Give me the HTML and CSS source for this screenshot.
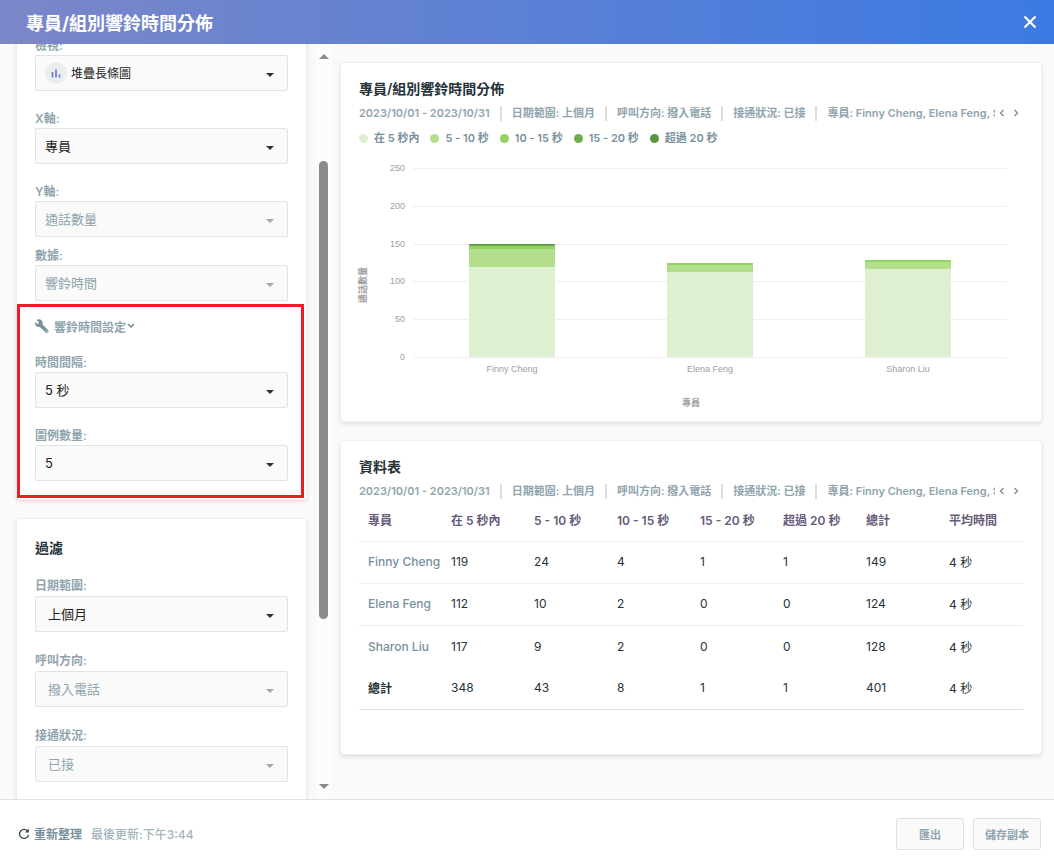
FILE: index.html
```html
<!DOCTYPE html>
<html lang="zh-Hant">
  <head>
    <meta charset="utf-8">
    <title>專員/組別響鈴時間分佈</title>
    <link rel="stylesheet" href="styles.css">
  </head>
  <body>
    <header class="topbar">
      <h1>專員/組別響鈴時間分佈</h1>
      <button class="close" aria-label="關閉">
        <svg width="14" height="14" viewBox="0 0 14 14"><path d="M1.5 1.5l11 11M12.5 1.5l-11 11" stroke="#fff" stroke-width="2.2" fill="none"/></svg>
      </button>
    </header>

    <main class="main">
      <aside class="sidebar">
        <div class="sidebar-scroll">
          <section class="card settings">
            <div class="field">
              <label for="view">檢視:</label>
              <div class="select with-icon">
                <span class="view-icon">
                  <svg width="10" height="10" viewBox="0 0 10 10"><path d="M1.500 4v5.500M5 1.500v8M8.500 6.500v3" stroke="#6673c4" stroke-width="1.600"/></svg>
                </span>
                <select id="view"><option>堆疊長條圖</option></select>
              </div>
            </div>
            <div class="field">
              <label for="x-axis">X軸:</label>
              <div class="select"><select id="x-axis"><option>專員</option></select></div>
            </div>
            <div class="field compact">
              <label for="y-axis">Y軸:</label>
              <div class="select disabled"><select id="y-axis" disabled><option>通話數量</option></select></div>
            </div>
            <div class="field last">
              <label for="metric">數據:</label>
              <div class="select disabled"><select id="metric" disabled><option>響鈴時間</option></select></div>
            </div>

            <div class="highlight">
              <button class="toggle">
                <svg width="14" height="14" viewBox="0 0 14 14">
                  <path d="M5.2 0.4C3.8-.1 2.4.2 1.400 1L3.900 3.300 3.300 4.500 2 4.900 0.300 2.700C-.3 4.500.2 6.300 1.500 7.300c1 .8 2.300 1 3.400.6l5.700 5.500c.7.6 1.700.6 2.400 0 .7-.7.7-1.700.1-2.400L7.500 5.600C8.200 3.500 7.300 1.200 5.200.4z" fill="#7d919c"/>
                  <circle cx="11.800" cy="12.100" r=".7" fill="#fff"/>
                </svg>
                <span>響鈴時間設定</span>
                <svg class="chevron" width="8" height="6" viewBox="0 0 8 6"><path d="M1 1l3 3 3-3" stroke="#6f8591" stroke-width="1.500" fill="none"/></svg>
              </button>
              <div class="field">
                <label for="interval">時間間隔:</label>
                <div class="select"><select id="interval"><option>5 秒</option></select></div>
              </div>
              <div class="field last">
                <label for="legend-count">圖例數量:</label>
                <div class="select"><select id="legend-count"><option>5</option></select></div>
              </div>
            </div>
          </section>

          <section class="card filters">
            <h2>過濾</h2>
            <div class="field">
              <label for="date-range">日期範圍:</label>
              <div class="select"><select id="date-range"><option>上個月</option></select></div>
            </div>
            <div class="field">
              <label for="direction">呼叫方向:</label>
              <div class="select disabled"><select id="direction" disabled><option>撥入電話</option></select></div>
            </div>
            <div class="field">
              <label for="status">接通狀況:</label>
              <div class="select disabled"><select id="status" disabled><option>已接</option></select></div>
            </div>
          </section>
        </div>
        <div class="scrollbar">
          <span class="arrow-up"></span>
          <div class="track"><div class="thumb"></div></div>
          <span class="arrow-down"></span>
        </div>
      </aside>

      <div class="content">
        <section class="card report">
          <h2>專員/組別響鈴時間分佈</h2>
          <div class="meta">
            <div class="meta-list">
              <span>2023/10/01 - 2023/10/31</span>
              <span>日期範圍: 上個月</span>
              <span>呼叫方向: 撥入電話</span>
              <span>接通狀況: 已接</span>
              <span>專員: Finny Cheng, Elena Feng, Sharon Liu</span>
            </div>
            <button aria-label="上一個"><svg width="6" height="8" viewBox="0 0 6 8"><path d="M4.500 1l-3 3 3 3" stroke="#7d919c" stroke-width="1.400" fill="none"/></svg></button>
            <button aria-label="下一個"><svg width="6" height="8" viewBox="0 0 6 8"><path d="M1.500 1l3 3-3 3" stroke="#7d919c" stroke-width="1.400" fill="none"/></svg></button>
          </div>
          <ul class="legend">
            <li class="c1">在 5 秒內</li>
            <li class="c2">5 - 10 秒</li>
            <li class="c3">10 - 15 秒</li>
            <li class="c4">15 - 20 秒</li>
            <li class="c5">超過 20 秒</li>
          </ul>

          <div class="chart">
            <div class="y-title"><span>通話數量</span></div>
            <div class="y-axis">
              <span>250</span><span>200</span><span>150</span><span>100</span><span>50</span><span>0</span>
            </div>
            <div class="plot">
              <div class="grid-lines"><i></i><i></i><i></i><i></i><i></i><i></i></div>
              <!-- segment heights are value / 250 -->
              <div class="bars">
                <div class="bar">
                  <i class="c5" style="height: 0.4%"></i>
                  <i class="c4" style="height: 0.4%"></i>
                  <i class="c3" style="height: 1.6%"></i>
                  <i class="c2" style="height: 9.6%"></i>
                  <i class="c1" style="height: 47.6%"></i>
                </div>
                <div class="bar">
                  <i class="c3" style="height: 0.8%"></i>
                  <i class="c2" style="height: 4%"></i>
                  <i class="c1" style="height: 44.8%"></i>
                </div>
                <div class="bar">
                  <i class="c3" style="height: 0.8%"></i>
                  <i class="c2" style="height: 3.6%"></i>
                  <i class="c1" style="height: 46.8%"></i>
                </div>
              </div>
            </div>
            <div class="x-axis"><span>Finny Cheng</span><span>Elena Feng</span><span>Sharon Liu</span></div>
          </div>
          <div class="x-title">專員</div>
        </section>

        <section class="card report table-card">
          <h2>資料表</h2>
          <div class="meta">
            <div class="meta-list">
              <span>2023/10/01 - 2023/10/31</span>
              <span>日期範圍: 上個月</span>
              <span>呼叫方向: 撥入電話</span>
              <span>接通狀況: 已接</span>
              <span>專員: Finny Cheng, Elena Feng, Sharon Liu</span>
            </div>
            <button aria-label="上一個"><svg width="6" height="8" viewBox="0 0 6 8"><path d="M4.500 1l-3 3 3 3" stroke="#7d919c" stroke-width="1.400" fill="none"/></svg></button>
            <button aria-label="下一個"><svg width="6" height="8" viewBox="0 0 6 8"><path d="M1.500 1l3 3-3 3" stroke="#7d919c" stroke-width="1.400" fill="none"/></svg></button>
          </div>
          <table>
            <thead>
              <tr><th>專員</th><th>在 5 秒內</th><th>5 - 10 秒</th><th>10 - 15 秒</th><th>15 - 20 秒</th><th>超過 20 秒</th><th>總計</th><th>平均時間</th></tr>
            </thead>
            <tbody>
              <tr><td class="name">Finny Cheng</td><td>119</td><td>24</td><td>4</td><td>1</td><td>1</td><td>149</td><td>4 秒</td></tr>
              <tr><td class="name">Elena Feng</td><td>112</td><td>10</td><td>2</td><td>0</td><td>0</td><td>124</td><td>4 秒</td></tr>
              <tr><td class="name">Sharon Liu</td><td>117</td><td>9</td><td>2</td><td>0</td><td>0</td><td>128</td><td>4 秒</td></tr>
            </tbody>
            <tfoot>
              <tr><td class="total">總計</td><td>348</td><td>43</td><td>8</td><td>1</td><td>1</td><td>401</td><td>4 秒</td></tr>
            </tfoot>
          </table>
        </section>
      </div>
    </main>

    <footer class="footer">
      <a class="refresh" href="#">
        <svg width="12" height="12" viewBox="0 0 12 12"><path d="M9.800 3.400A4.500 4.500 0 1 0 10.500 6.800" stroke="#37474f" stroke-width="1.300" fill="none"/><path d="M10.900.6v4H7z" fill="#37474f"/></svg>
        <span>重新整理</span>
      </a>
      <span class="updated">最後更新:下午3:44</span>
      <button class="btn">匯出</button>
      <button class="btn">儲存副本</button>
    </footer>
  </body>
</html>
```
FILE: styles.css
```css
* {
  box-sizing: border-box;
}

body {
  margin: 0;
  height: 100vh;
  display: flex;
  flex-direction: column;
  overflow: hidden;
  background-color: #fafafa;
  color: #263238;
  font-family: Inter, "Noto Sans CJK TC", sans-serif;
  font-size: 12px;
}

button {
  padding: 0;
  border: none;
  background: none;
  font-family: inherit;
  cursor: pointer;
}

svg {
  display: block;
}

.topbar {
  flex: none;
  height: 44px;
  padding: 0 17px 0 26px;
  display: flex;
  align-items: center;
  justify-content: space-between;
  background: linear-gradient(90deg, #7c87c8, #6582d0 34%, #3b7ae3);
}

.topbar h1 {
  margin: 0;
  color: white;
  font-size: 18px;
  font-weight: 700;
}

.main {
  flex: 1;
  min-height: 0;
  display: flex;
}

.sidebar {
  flex: 0 0 331px;
  display: flex;
  padding-left: 16px;
}

.sidebar-scroll {
  flex: 1;
  overflow: hidden;
  padding-right: 9px;
  margin-left: -8px;
  padding-left: 8px;
}

.card {
  background-color: white;
  border: 1px solid #efefef;
  border-radius: 4px;
  box-shadow: 0 2px 4px rgba(0, 0, 0, 0.1);
}

.card h2 {
  margin: 0;
  font-size: 14px;
  font-weight: 600;
  line-height: 20px;
}

/* settings panel is scrolled part of the way down */
.settings {
  margin-top: -26px;
  padding: 18px 18px 1px;
}

.filters {
  margin-top: 18px;
  padding: 19px 18px;
}

.filters h2 {
  margin-bottom: 18px;
}

.field {
  margin-bottom: 19px;
}

.field.compact {
  margin-bottom: 10px;
}

.field.last {
  margin-bottom: 0;
}

.field label {
  display: block;
  color: #90a4ae;
  font-weight: 600;
  line-height: 18px;
}

.filters .field label {
  line-height: 20px;
}

.select {
  position: relative;
  display: flex;
  align-items: center;
  height: 36px;
  border: 1px solid #dfe5e6;
  border-radius: 2px;
  background-color: #fafafa;
}

.select::after {
  content: "";
  position: absolute;
  right: 13px;
  top: 17px;
  border: 4px solid transparent;
  border-top-color: #263238;
  border-bottom: none;
}

.select.disabled::after {
  border-top-color: #a3a9ac;
}

.select select {
  appearance: none;
  flex: 1;
  height: 34px;
  padding: 0 28px 0 9px;
  border: none;
  background: none;
  color: #212121;
  font-family: inherit;
  font-size: 13px;
}

.filters .select select {
  padding-left: 12px;
}

.select.disabled select {
  color: #90a4ae;
  opacity: 1;
}

.with-icon select {
  padding-left: 4px;
  font-size: 12px;
}

.view-icon {
  width: 22px;
  height: 22px;
  margin-left: 9px;
  display: flex;
  align-items: center;
  justify-content: center;
  border-radius: 50%;
  background-color: #eceff1;
}

.highlight {
  margin: 3px -16px 0 -18px;
  padding: 10px 13px 14px 15px;
  border: 3px solid #ed1c24;
}

.toggle {
  display: flex;
  align-items: center;
  height: 18px;
  margin-bottom: 19px;
  color: #90a4ae;
  font-size: 12px;
  font-weight: 600;
}

.toggle span {
  margin-left: 5px;
}

.toggle .chevron {
  margin-left: 1px;
}

.scrollbar {
  flex: 0 0 15px;
  display: flex;
  flex-direction: column;
  align-items: center;
  padding: 10px 0;
  background-color: #fcfcfc;
}

.arrow-up,
.arrow-down {
  border: 5px solid transparent;
}

.arrow-up {
  border-top: none;
  border-bottom-color: #8b8b8b;
}

.arrow-down {
  border-bottom: none;
  border-top-color: #8b8b8b;
}

.track {
  flex: 1;
  display: flex;
  flex-direction: column;
  padding: 102px 0 165px;
}

.thumb {
  flex: 1;
  width: 9px;
  border-radius: 5px;
  background-color: #8b8b8b;
}

.content {
  flex: 1;
  min-width: 0;
  padding: 18px 12px 18px 9px;
  overflow: hidden;
}

.report {
  padding: 16px 18px 12px;
}

.table-card {
  margin-top: 18px;
  padding-bottom: 44px;
}

.meta {
  display: flex;
  align-items: center;
  margin-top: 5px;
  height: 18px;
  color: #90a4ae;
  font-size: 11px;
  font-weight: 600;
}

.meta-list {
  flex: 1;
  display: flex;
  overflow: hidden;
  white-space: nowrap;
  line-height: 15px;
}

.meta-list span + span {
  margin-left: 10px;
  padding-left: 10px;
  border-left: 2px solid #dcdcdc;
}

.meta button {
  margin: 0 4px;
}

.legend {
  display: flex;
  gap: 11px;
  margin: 7px 0 21px;
  padding: 0;
  list-style: none;
  color: #78909c;
  font-size: 11px;
  font-weight: 600;
  line-height: 18px;
}

.legend li {
  display: flex;
  align-items: center;
}

.legend li::before {
  content: "";
  width: 9px;
  height: 9px;
  margin-right: 6px;
  border-radius: 50%;
  background-color: var(--series);
}

.c1 { --series: #dff0d0; }
.c2 { --series: #b3df8d; }
.c3 { --series: #92d35f; }
.c4 { --series: #6fad4c; }
.c5 { --series: #5b9440; }

.chart {
  display: grid;
  grid-template-columns: 14px 32px 1fr;
  grid-template-rows: 190px auto;
  column-gap: 4px;
  padding-right: 16px;
  color: #9e9e9e;
  font-family: "Liberation Sans", "Noto Sans CJK TC", sans-serif;
  font-size: 9px;
}

.y-title {
  display: flex;
  align-items: flex-end;
  padding-bottom: 55px;
  font-weight: 700;
  line-height: 9px;
}

.y-title span {
  writing-mode: vertical-rl;
  text-orientation: sideways;
  transform: rotate(180deg);
}

.y-axis {
  display: flex;
  flex-direction: column;
  justify-content: space-between;
  margin: -5px 4px -5px 0;
  line-height: 11px;
  text-align: right;
}

.plot {
  display: grid;
}

.grid-lines,
.bars {
  grid-area: 1 / 1;
}

.grid-lines {
  display: flex;
  flex-direction: column;
  justify-content: space-between;
}

.grid-lines i {
  height: 1px;
  background-color: #f0f0f0;
}

.bars,
.x-axis {
  display: grid;
  grid-template-columns: repeat(3, 1fr);
  justify-items: center;
}

.bar {
  width: 43%;
  display: flex;
  flex-direction: column;
  justify-content: flex-end;
  padding-bottom: 1px;
}

.bar i {
  background-color: var(--series);
}

.x-axis {
  grid-column: 3;
  margin-top: 5px;
  line-height: 12px;
}

.x-title {
  margin-top: 22px;
  color: #9e9e9e;
  font-size: 9px;
  font-weight: 700;
  line-height: 12px;
  text-align: center;
}

table {
  width: 100%;
  table-layout: fixed;
  border-collapse: separate;
  border-spacing: 0;
}

th,
td {
  height: 42px;
  padding: 0 0 2px 9px;
  text-align: left;
  white-space: nowrap;
}

th {
  color: #665a78;
  font-weight: 600;
  border-bottom: 1px solid #eceff1;
}

td {
  color: #263238;
  border-bottom: 1px solid #eceff1;
}

tbody tr:last-child td {
  border-bottom: none;
}

tfoot td {
  border-bottom: 1px solid #dcdfe0;
}

.name {
  color: #78909c;
  font-weight: 500;
}

.total {
  font-weight: 600;
}

.footer {
  flex: none;
  height: 68px;
  display: flex;
  align-items: center;
  padding: 0 13px 0 18px;
  border-top: 1px solid #dfe2e4;
  background-color: white;
}

.refresh {
  display: flex;
  align-items: center;
  gap: 4px;
  color: #78909c;
  font-weight: 600;
  text-decoration: none;
}

.updated {
  margin-left: 9px;
  margin-right: auto;
  color: #a4b4bc;
  font-weight: 500;
}

.btn {
  min-width: 68px;
  height: 32px;
  margin-left: 9px;
  border: 1px solid #dbe1e4;
  border-radius: 3px;
  background-color: #fafafa;
  color: #90a4ae;
  font-size: 11px;
  font-weight: 700;
}
```
